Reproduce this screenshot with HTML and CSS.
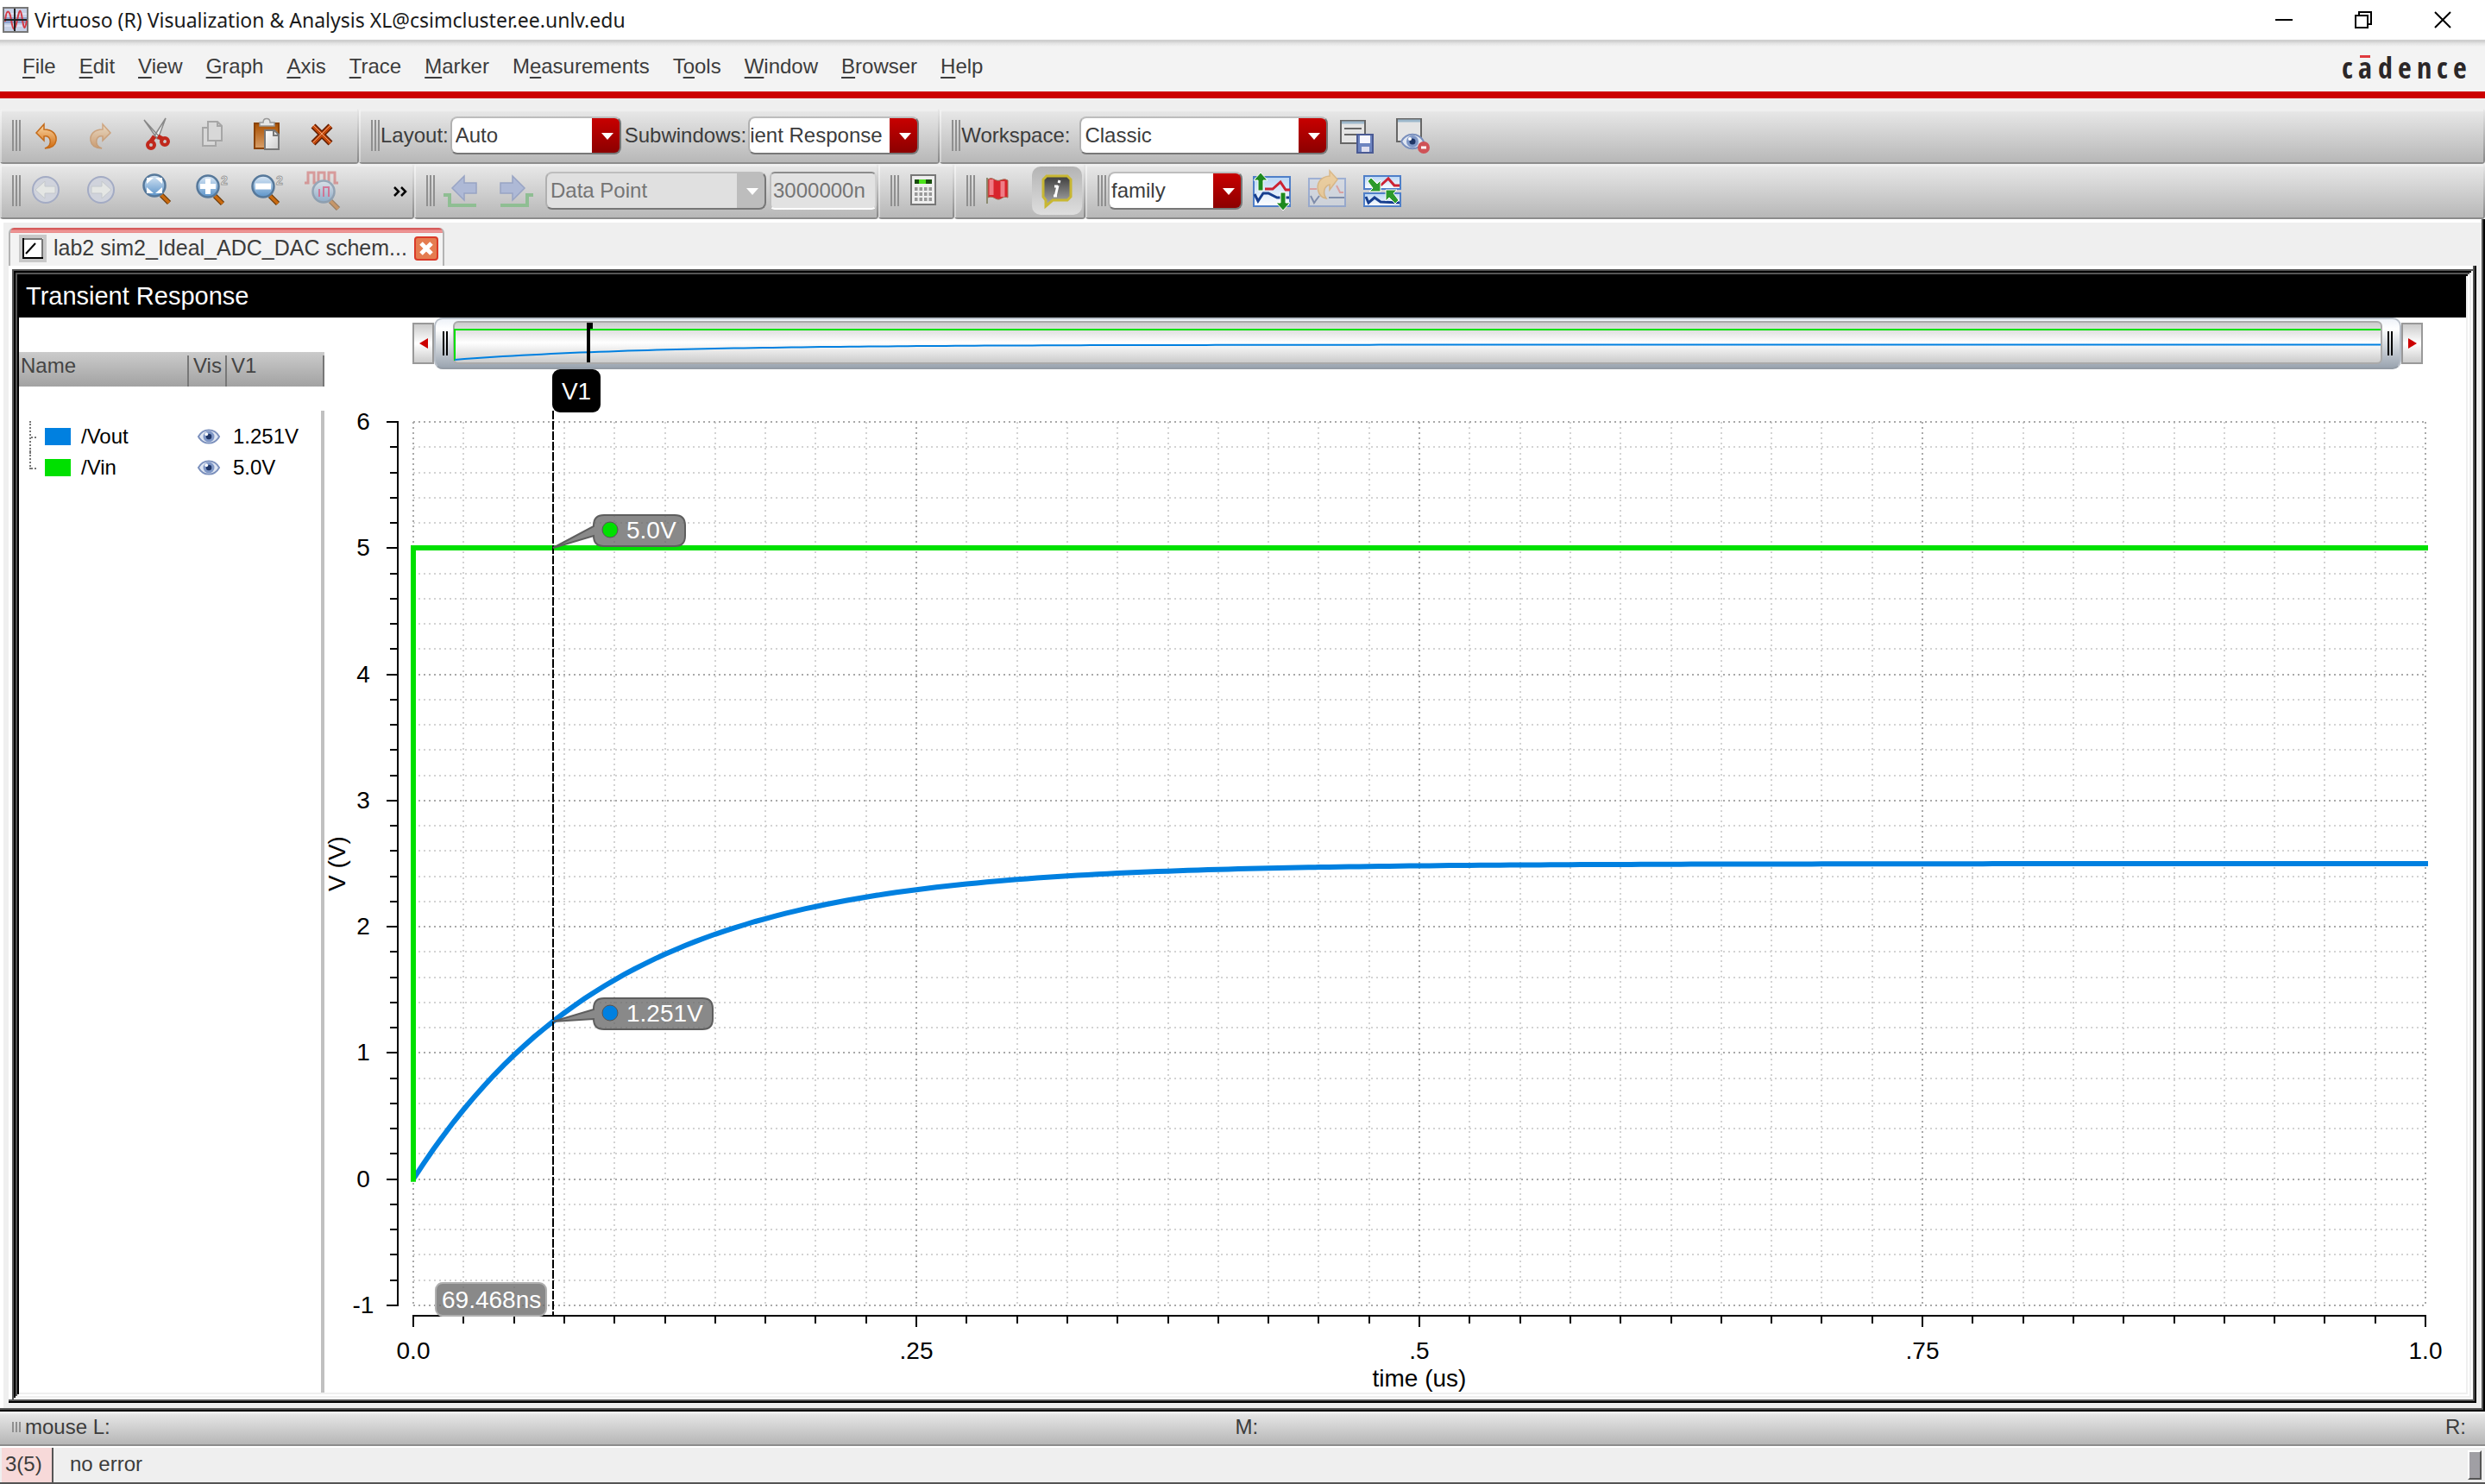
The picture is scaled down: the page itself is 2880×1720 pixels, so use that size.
FILE: index.html
```html
<!DOCTYPE html>
<html lang="en">
<head>
<meta charset="utf-8">
<title>Virtuoso (R) Visualization &amp; Analysis XL</title>
<link rel="stylesheet" href="styles.css">
</head>
<body>
<svg width="0" height="0" class="defs" aria-hidden="true">
  <defs>
    <linearGradient id="orange" x1="0" y1="0" x2="0" y2="1"><stop offset="0" stop-color="#fbd9a8"/><stop offset="1" stop-color="#d0690c"/></linearGradient>
    <linearGradient id="board" x1="0" y1="0" x2="0" y2="1"><stop offset="0" stop-color="#a84f00"/><stop offset="1" stop-color="#d9a06a"/></linearGradient>
    <linearGradient id="paper" x1="0" y1="0" x2="1" y2="1"><stop offset="0" stop-color="#fff"/><stop offset="1" stop-color="#ccc"/></linearGradient>
    <linearGradient id="glass" x1="0" y1="0" x2="0" y2="1"><stop offset="0" stop-color="#dbe9f6"/><stop offset="1" stop-color="#5b93c9"/></linearGradient>
    <linearGradient id="sky" x1="0" y1="0" x2="0" y2="1"><stop offset="0" stop-color="#b9d6f5"/><stop offset="1" stop-color="#fff"/></linearGradient>
    <linearGradient id="bubble" x1="0" y1="0" x2="0" y2="1"><stop offset="0" stop-color="#3c3c3c"/><stop offset="1" stop-color="#b0b0b0"/></linearGradient>
    <g id="lens"><path d="M26 26l9 9" stroke="#6b3a08" stroke-width="6"/><path d="M26 26l9 9" stroke="#c96a10" stroke-width="3.5"/><circle cx="18" cy="15" r="12.500" fill="url(#glass)" stroke="#56789a" stroke-width="2.500"/></g>
    <g id="eye"><path d="M0 9C6-2 20-2 26 9C20 20 6 20 0 9z" fill="#dfe6f2" stroke="#7a8fbc" stroke-width="2"/><circle cx="13" cy="9" r="7" fill="#7f97c6"/><circle cx="13" cy="9" r="3.500" fill="#1f3566"/><circle cx="10" cy="6" r="2" fill="#fff"/></g>
  </defs>
</svg>

<header class="titlebar">
  <svg class="app-icon" width="30" height="30" viewBox="0 0 30 30" aria-hidden="true"><rect x="1" y="1" width="28" height="28" fill="#c6d0e6" stroke="#777" stroke-width="2"/><path d="M2 8h26M2 22h26" stroke="#eef" stroke-width="1"/><path d="M2 12h26v7H2z" fill="#8fa3cf"/><path d="M3 17C4 2 8 2 10 15S14 30 17 15S21 2 23 15S26 26 28 16" fill="none" stroke="#d43b45" stroke-width="2"/><path d="M2 15h26M14 2v26" stroke="#222" stroke-width="2"/></svg>
  <h1>Virtuoso (R) Visualization &amp; Analysis XL@csimcluster.ee.unlv.edu</h1>
  <div class="window-buttons">
    <button aria-label="Minimize"><svg width="20" height="20" viewBox="0 0 20 20"><path d="M0 10h20" stroke="#000" stroke-width="2"/></svg></button>
    <button aria-label="Restore"><svg width="20" height="20" viewBox="0 0 20 20"><path d="M1 5h14v14H1zM5 5V1h14v14h-4" fill="none" stroke="#000" stroke-width="2"/></svg></button>
    <button aria-label="Close"><svg width="20" height="20" viewBox="0 0 20 20"><path d="M1 1l18 18M19 1L1 19" stroke="#000" stroke-width="2"/></svg></button>
  </div>
</header>

<nav class="menubar">
  <div class="menus">
    <button><u>F</u>ile</button><button><u>E</u>dit</button><button><u>V</u>iew</button><button><u>G</u>raph</button><button><u>A</u>xis</button><button><u>T</u>race</button><button><u>M</u>arker</button><button>M<u>e</u>asurements</button><button>T<u>o</u>ols</button><button><u>W</u>indow</button><button><u>B</u>rowser</button><button><u>H</u>elp</button>
  </div>
  <svg class="brand" width="148" height="34" viewBox="0 0 148 34" role="img"><text x="0 19 42 65 87 110 129" y="31">cadence</text><path d="M21 5.500h12" stroke="#e03a3e" stroke-width="3"/></svg>
</nav>

<div class="toolbars">
  <div class="toolbar">
    <div class="group icons">
      <i class="grip"></i>
      <button aria-label="Undo"><svg viewBox="0 0 40 40"><path d="M9 17L18 7v6c10 0 15 6 14 13c-1 6-6 9-13 9c5-2 7-6 6-10c-1-3-3-5-7-4v5z" fill="url(#orange)" stroke="#c46a18" stroke-width="1.500"/></svg></button>
      <button aria-label="Redo"><svg viewBox="0 0 40 40" opacity=".45"><path d="M31 17L22 7v6c-10 0-15 6-14 13c1 6 6 9 13 9c-5-2-7-6-6-10c1-3 3-5 7-4v5z" fill="url(#orange)" stroke="#c46a18" stroke-width="1.500"/></svg></button>
      <button aria-label="Cut"><svg viewBox="0 0 40 40"><path d="M6 2l14 20 4 0zM31 0L17 22l5 2z" fill="#f4f4f4" stroke="#888" stroke-width="1.500"/><path d="M18 21l-5 7M22 21l7 4" stroke="#c0281c" stroke-width="5"/><circle cx="14" cy="31" r="4" fill="none" stroke="#c0281c" stroke-width="4"/><circle cx="30" cy="27" r="4" fill="none" stroke="#c0281c" stroke-width="4"/></svg></button>
      <button aria-label="Copy"><svg viewBox="0 0 40 40" fill="#d8d8d8" stroke="#a6a6a6" stroke-width="2"><path d="M10 11h15v21H10z"/><path d="M16 4h11l5 5v17H16z"/><path d="M27 4v5h5" fill="none"/></svg></button>
      <button aria-label="Paste"><svg viewBox="0 0 40 40"><path d="M6 6h28v29H6z" fill="url(#board)" stroke="#8a4300" stroke-width="2"/><path d="M12 9V5h4c0-6 8-6 8 0h5v4z" fill="#e6e6e6" stroke="#999" stroke-width="1.500"/><path d="M18 14h11l5 5v17H18z" fill="url(#paper)" stroke="#777" stroke-width="2"/><path d="M28 14v6h6" fill="none" stroke="#777" stroke-width="2"/></svg></button>
      <button aria-label="Delete"><svg viewBox="0 0 40 40"><path d="M10 9l20 20M30 9L10 29" stroke="#5e1c00" stroke-width="7"/><path d="M10 9l20 20M30 9L10 29" stroke="#c4490c" stroke-width="4"/><path d="M10 8l20 20M30 8L10 28" stroke="#f2a070" stroke-width="1"/></svg></button>
    </div>
    <div class="group layout-group">
      <i class="grip"></i>
      <label for="layout">Layout:</label>
      <span class="combo mid"><select id="layout"><option>Auto</option></select></span>
      <label for="sub">Subwindows:</label>
      <span class="combo mid tight"><select id="sub"><option>ient Response</option></select></span>
    </div>
    <div class="group grow workspace-group">
      <i class="grip"></i>
      <label for="space">Workspace:</label>
      <span class="combo wide"><select id="space"><option>Classic</option></select></span>
      <button aria-label="Save workspace"><svg viewBox="0 0 40 40"><path d="M1 3h28v26H1z" fill="#e4e4e4" stroke="#666" stroke-width="2"/><path d="M2 5h26" stroke="#9db8cc" stroke-width="3"/><path d="M5 12h20M5 19h16" stroke="#666" stroke-width="2"/><rect x="20" y="19" width="18" height="21" fill="#6d84c0" stroke="#4a5a94" stroke-width="2"/><rect x="23" y="20" width="12" height="9" fill="#f6f6ff"/><rect x="25" y="33" width="9" height="6" fill="#dde"/></svg></button>
      <button aria-label="Hide assistants"><svg viewBox="0 0 40 40"><path d="M2 1h28v26H2z" fill="#e4e4e4" stroke="#666" stroke-width="2"/><path d="M3 3h26" stroke="#9db8cc" stroke-width="3"/><use href="#eye" x="7" y="18"/><circle cx="33" cy="34" r="7" fill="#cf5257"/><path d="M30 34h6" stroke="#fff" stroke-width="3"/></svg></button>
    </div>
  </div>
  <div class="toolbar">
    <div class="group icons with-more">
      <i class="grip"></i>
      <button aria-label="Back"><svg viewBox="0 0 40 40"><circle cx="20" cy="19" r="15" fill="#d0d3dc" stroke="#a3abc4" stroke-width="2"/><path d="M8 19l11-10v6h12v8H19v6z" fill="#e4e6e4" stroke="#c4c8cc"/></svg></button>
      <button aria-label="Forward"><svg viewBox="0 0 40 40"><circle cx="20" cy="19" r="15" fill="#d0d3dc" stroke="#a3abc4" stroke-width="2"/><path d="M32 19L21 9v6H9v8h12v6z" fill="#e4e6e4" stroke="#c4c8cc"/></svg></button>
      <button aria-label="Zoom fit"><svg viewBox="0 0 40 40"><use href="#lens" y="-1"/><path d="M9 12V5h8zM27 12V5h-8zM9 16v7h8zM27 16v7h-8z" fill="#fff"/></svg></button>
      <button aria-label="Zoom in"><svg viewBox="0 0 40 40"><use href="#lens" x="-2"/><path d="M16 6v18M7 15h18" stroke="#fff" stroke-width="6"/><text x="31" y="13" class="badge">2</text></svg></button>
      <button aria-label="Zoom out"><svg viewBox="0 0 40 40"><use href="#lens" x="-2"/><path d="M7 15h18" stroke="#fff" stroke-width="7"/><text x="31" y="13" class="badge">2</text></svg></button>
      <button aria-label="Zoom waveform"><svg viewBox="0 0 40 40" opacity=".5"><path d="M0 11h4V-1h7v12h5V-1h7v12h5V-1h7v12h4" fill="none" stroke="#d05858" stroke-width="3"/><g transform="translate(4 6)"><use href="#lens"/><path d="M13 12v9M18 21v-11h6v11" fill="none" stroke="#d02060" stroke-width="2"/></g></svg></button>
      <button class="more" aria-label="More tools"><svg viewBox="0 0 16 12"><path d="M1 1l5 5-5 5M9 1l5 5-5 5" fill="none" stroke="#000" stroke-width="2.500"/></svg></button>
    </div>
    <div class="group step-group">
      <i class="grip"></i>
      <button aria-label="Previous point"><svg viewBox="0 0 40 40"><path d="M10 17L24 3v8h14v12H24v8z" fill="#aeb9d6" stroke="#98a4c4" stroke-width="1.500"/><path d="M0 25h7v12h31" fill="none" stroke="#8fbe93" stroke-width="4"/></svg></button>
      <button aria-label="Next point"><svg viewBox="0 0 40 40"><path d="M30 17L16 3v8H2v12h14v8z" fill="#aeb9d6" stroke="#98a4c4" stroke-width="1.500"/><path d="M2 37h31V25h7" fill="none" stroke="#8fbe93" stroke-width="4"/></svg></button>
      <span class="combo step off"><select aria-label="Step mode" disabled><option>Data Point</option></select></span>
      <input class="step-size" type="text" value="3000000n" aria-label="Step size" disabled>
    </div>
    <div class="group calc-group">
      <i class="grip"></i>
      <button aria-label="Calculator"><svg viewBox="0 0 40 40"><rect x="6" y="2" width="28" height="34" fill="#eee" stroke="#777" stroke-width="2"/><rect x="10" y="7" width="20" height="5" fill="#174d0c"/><rect x="15" y="7" width="8" height="5" fill="#4be31b"/><path d="M10 18h20M10 24h20M10 30h20" stroke="#999" stroke-width="4" stroke-dasharray="3.500 2"/></svg></button>
    </div>
    <div class="group flag-group">
      <i class="grip"></i>
      <button aria-label="Add marker"><svg viewBox="0 0 40 40"><path d="M8 5v30" stroke="#8b8b70" stroke-width="2"/><path d="M9 7c6-4 8 3 14 1s6-1 9 0v20c-5-2-6 1-10 2s-7-5-13-2z" fill="#d8242c" stroke="#a06a50" stroke-width="1"/><path d="M13 7v18M26 9v18" stroke="#ef7d86" stroke-width="5"/></svg></button>
      <button class="pressed" aria-label="Info balloons"><svg viewBox="0 0 40 40"><path d="M8 3h24l4 4v20l-4 4H15l-8 7v-7l-3-4V7z" fill="url(#bubble)" stroke="#c8b733" stroke-width="3"/><path d="M23 8l-1 3M21 14l-3 13M17 15h4M16 26h4" stroke="#fff" stroke-width="3"/></svg></button>
    </div>
    <div class="group grow family-group">
      <i class="grip"></i>
      <span class="combo small"><select aria-label="Strip mode"><option>family</option></select></span>
      <button aria-label="Split strips"><svg viewBox="0 0 44 40"><rect x="1" y="4" width="42" height="34" fill="url(#sky)" stroke="#4f7fc8" stroke-width="2"/><path d="M14 18h9l9-8 6 9h5" fill="none" stroke="#cc2233" stroke-width="3"/><path d="M2 24l4 8 6-9 6 0 10 5h14" fill="none" stroke="#173f8f" stroke-width="3"/><path d="M9-1l8 9h-5v12H6V8H1zM35 43l8-9h-5V22h-6v12h-5z" fill="#1e8a1e" stroke="#fff"/></svg></button>
      <button aria-label="Restore strips"><svg viewBox="0 0 44 40" opacity=".65"><rect x="1" y="6" width="42" height="32" fill="#d3dae6" stroke="#7f9ad0" stroke-width="2"/><path d="M2 18h8M33 14l4 8h4" fill="none" stroke="#d88" stroke-width="2"/><path d="M3 26l4 8 6-8M24 28h18" fill="none" stroke="#5a6f9c" stroke-width="2"/><path d="M34 7L25-3v6C14 4 9 12 12 21c1 4 4 7 9 8c-4-6-3-14 4-16v6z" fill="#f2c680" stroke="#d8a55c" stroke-width="1.500"/></svg></button>
      <button aria-label="Merge strips"><svg viewBox="0 0 44 40"><rect x="1" y="3" width="42" height="15" fill="url(#sky)" stroke="#4f7fc8" stroke-width="2"/><rect x="1" y="23" width="42" height="15" fill="url(#sky)" stroke="#4f7fc8" stroke-width="2"/><path d="M20 14l9-8 7 8 6 0" fill="none" stroke="#cc2233" stroke-width="3"/><path d="M3 27l3 7 7-6 7 5 22 1" fill="none" stroke="#173f8f" stroke-width="3"/><path d="M5 9l4-4 7 7 4-4v13H7l4-4zM41 31l-4 4-7-7-4 4V19h13l-4 4z" fill="#2c9a2c" stroke="#fff"/></svg></button>
    </div>
  </div>
</div>

<main class="workspace">
  <div class="tabs">
    <div class="tab">
      <svg width="32" height="32" viewBox="0 0 32 32" aria-hidden="true"><path d="M0 0h32v32H0z" fill="#c8c8c8"/><path d="M4 4h24v24H4z" fill="#fff"/><path d="M27 5v22M5 5h22" stroke="#777" stroke-width="2"/><path d="M5 4v23h23" fill="none" stroke="#000" stroke-width="2"/><path d="M8 22L19 10" stroke="#000" stroke-width="2"/></svg>
      <a href="#plot">lab2 sim2_Ideal_ADC_DAC schem...</a>
      <button aria-label="Close tab"><svg width="28" height="28" viewBox="0 0 28 28"><rect x="1" y="1" width="26" height="26" rx="3" fill="#e57c50" stroke="#da3a28" stroke-width="2"/><path d="M8 8l12 12M20 8L8 20" stroke="#fff" stroke-width="5"/></svg></button>
    </div>
  </div>
  <div class="subwindow">
    <div class="frame">
      <h2>Transient Response</h2>
      <div class="content" id="plot">
        <aside class="legend">
          <table>
            <thead><tr><th class="name">Name</th><th class="vis">Vis</th><th>V1</th></tr></thead>
            <tbody>
              <tr><td class="trace"><i class="branch"></i><i class="swatch blue"></i>/Vout</td><td class="vis"><svg width="26" height="20" viewBox="-1 -1 28 20"><use href="#eye"/></svg></td><td>1.251V</td></tr>
              <tr><td class="trace"><i class="branch last"></i><i class="swatch green"></i>/Vin</td><td class="vis"><svg width="26" height="20" viewBox="-1 -1 28 20"><use href="#eye"/></svg></td><td>5.0V</td></tr>
            </tbody>
          </table>
        </aside>
        <section class="graph">
          <div class="ranger">
            <button class="nudge" aria-label="Pan left"><svg width="10" height="12" viewBox="0 0 10 12"><path d="M10 0v12L0 6z" fill="#c00"/></svg></button>
            <div class="track">
              <i class="handle"></i>
              <div class="overview"><svg id="overview"></svg></div>
              <i class="handle"></i>
            </div>
            <button class="nudge" aria-label="Pan right"><svg width="10" height="12" viewBox="0 0 10 12"><path d="M0 0v12l10-6z" fill="#c00"/></svg></button>
          </div>
          <div class="canvas"><svg id="chart" role="img"></svg></div>
        </section>
      </div>
    </div>
  </div>
</main>

<footer>
  <div class="mousebar"><i class="grip short"></i><span>mouse L:</span><span>M:</span><span>R:</span></div>
  <div class="status"><span class="count">3(5)</span><span class="message">no error</span><i class="knob"></i></div>
</footer>
<script src="chart.js"></script>
</body>
</html>
```
FILE: styles.css
```css
* { box-sizing: border-box; }

body {
  margin: 0;
  min-height: 100vh;
  display: flex;
  flex-direction: column;
  background: #efefef;
  color: #3c3c3c;
  font: 24px/32px "Liberation Sans", Arial, sans-serif;
}

button {
  margin: 0;
  padding: 0;
  border: 0;
  background: none;
  color: inherit;
  font: inherit;
}

svg { display: block; overflow: visible; }
.defs { position: absolute; }

/* Title bar */
.titlebar {
  display: flex;
  align-items: center;
  height: 46px;
  padding: 0 39px 0 3px;
  background: #fff;
  color: #1a1a1a;
}
.titlebar h1 {
  flex: 1;
  margin: 0 0 0 7px;
  font: 400 23px/32px "Noto Sans", "Open Sans", sans-serif;
}
.window-buttons { display: flex; gap: 72px; }

/* Menu bar */
.menubar {
  display: flex;
  justify-content: space-between;
  align-items: center;
  height: 68px;
  padding: 2px 18px 0 26px;
  background: linear-gradient(#cfcfcf 2px, #e2e2e2 4px, #f3f3f3 8px);
  border-bottom: 8px solid #c00;
}
.menus { display: flex; gap: 27px; }
.menus u { text-decoration-thickness: 2px; text-underline-offset: 4px; }
.brand text {
  font: 700 34px "Liberation Sans Narrow", "Open Sans Condensed", "DejaVu Sans Condensed", sans-serif;
  fill: #2b2728;
}

/* Toolbars */
.toolbars { padding-top: 12px; }
.toolbar { display: flex; }
.group {
  display: flex;
  align-items: center;
  height: 64px;
  padding: 0 0 2px 14px;
  border-radius: 4px;
  background:
    linear-gradient(#8c8c8c, #8c8c8c) bottom / 100% 2px no-repeat,
    linear-gradient(#e8e8e8, #858585) right / 2px 100% no-repeat,
    linear-gradient(#f4f4f4, #d0d0d0) left / 2px 100% no-repeat,
    linear-gradient(#f0f0f0 2px, #e6e6e6 4px, #b6b6b6);
}
.group.grow { flex: 1; }
.group button { width: 40px; height: 40px; flex: none; }
.group button svg { width: 100%; height: 40px; }
.grip {
  flex: none;
  width: 10px;
  height: 36px;
  background: repeating-linear-gradient(90deg, #8f8f8f 0 2px, transparent 2px 4px);
}
.grip.short { height: 12px; }

.icons { gap: 24px; padding-right: 23px; }
.icons .grip { margin-right: -15px; }
.icons.with-more { padding-right: 8px; }
.group .more { width: 16px; height: 16px; margin-left: 39px; }
.group .more svg { height: 12px; margin-top: 2px; }
.badge { font: 700 14px "Liberation Sans", sans-serif; fill: #fff; stroke: #999; stroke-width: 1px; }

.layout-group { padding-right: 24px; }
.layout-group label { padding: 0 2px 0 1px; }
.layout-group .combo + label { padding-left: 4px; }
.workspace-group label { padding: 0 11px 0 1px; }
.workspace-group button { margin-left: 14px; }
.workspace-group button + button { margin-left: 24px; }
.step-group { padding-right: 2px; }
.step-group button { margin-left: 10px; }
.step-group button + button { margin-left: 24px; }
.step-group .combo { margin-left: 14px; }
.calc-group { padding-right: 16px; }
.calc-group button { margin-left: 8px; }
.flag-group { padding-right: 4px; }
.flag-group button { margin-left: 6px; }
.flag-group .pressed {
  width: 58px;
  height: 56px;
  margin-left: 20px;
  border-radius: 10px;
  background: linear-gradient(#b4b4b4, #dedede);
}
.flag-group .grip { margin-left: 0; }
.family-group button { width: 44px; margin-left: 12px; }
.family-group button + button { margin-left: 20px; }
.family-group .combo { margin-left: 2px; }

.combo { position: relative; display: block; height: 44px; flex: none; }
.combo::after {
  content: "";
  position: absolute;
  top: 19px;
  right: 9px;
  border: 7px solid transparent;
  border-top: 8px solid #fff;
  border-bottom: 0;
  pointer-events: none;
}
.combo select {
  appearance: none;
  width: 100%;
  height: 44px;
  padding: 0 0 0 4px;
  border: 2px solid;
  border-color: #bdbdbd #777 #777 #b0b0b0;
  border-radius: 8px;
  background: linear-gradient(#c80000, #8c0000) right / 32px 100% no-repeat #fff;
  color: #3c3c3c;
  font: inherit;
}
.combo.off select {
  background: linear-gradient(#bdbdbd, #bdbdbd) right / 32px 100% no-repeat #e0e0e0;
  color: #747474;
  opacity: 1;
}
.combo.tight select { padding-left: 0; }
.mid { width: 198px; }
.wide { width: 288px; }
.step { width: 256px; }
.small { width: 156px; }
.small select { padding-left: 2px; }
.step-size {
  width: 124px;
  height: 44px;
  margin-left: 4px;
  padding: 0 2px;
  border: 2px solid;
  border-color: #8c8c8c #d0d0d0 #fff #c0c0c0;
  border-radius: 6px;
  background: #e2e2e2;
  color: #747474;
  font: inherit;
}

/* Workspace with its tab and bevelled frames */
.workspace {
  flex: 1;
  display: flex;
  flex-direction: column;
  padding: 4px 10px 10px;
  box-shadow: inset -2px -2px #000, inset -4px -4px #555, inset 4px 4px #fff;
}
.tabs { display: flex; height: 50px; padding-top: 6px; }
.tab {
  display: flex;
  align-items: center;
  padding: 0 5px 0 10px;
  border: 2px solid #b4b4b4;
  border-width: 0 2px;
  border-radius: 6px 6px 0 0;
  background: linear-gradient(#d65c5c 2px, #f09a9a 3px, #e88a8a 6px, #f3f3f3 6px);
}
.tab > svg, .tab button { margin-top: 3px; }
.tab a { margin: 2px 8px 0 8px; color: inherit; font-size: 25px; text-decoration: none; }
.subwindow {
  flex: 1;
  display: flex;
  padding: 4px;
  box-shadow: inset -2px -2px #000, inset -4px -4px #555, inset 4px 4px #fff;
}
.frame {
  flex: 1;
  display: flex;
  flex-direction: column;
  min-width: 0;
  padding: 8px;
  background: #fff;
  box-shadow:
    inset 2px 2px #555, inset -2px -2px #fff,
    inset 4px 4px #000, inset -4px -4px #efefef,
    inset 6px 6px #555, inset -6px -6px #fff,
    inset 8px 8px #000, inset -8px -8px #efefef;
}
.frame h2 {
  margin: 0;
  padding: 7px 8px 9px;
  background: #000;
  color: #fff;
  font-size: 29px;
  font-weight: 400;
}
.content { flex: 1; display: flex; color: #000; }

/* Trace list */
.legend {
  flex: none;
  width: 354px;
  padding-top: 40px;
  background: linear-gradient(#c0c0c0, #c0c0c0) right 108px / 4px 100% no-repeat;
}
.legend table { width: 100%; border-collapse: collapse; table-layout: fixed; }
.legend thead tr { height: 40px; background: linear-gradient(#cbcbcb, #a2a2a2); }
.legend th {
  padding: 0 0 8px 5px;
  color: #444;
  font-weight: 400;
  text-align: left;
  vertical-align: middle;
  background: linear-gradient(#777, #777) right 4px / 2px 100% no-repeat;
}
.legend .name { width: 197px; padding-left: 2px; }
.legend th.vis { width: 44px; }
.legend tbody::before { content: ""; display: block; height: 40px; }
.legend tbody tr { height: 36px; }
.legend td { padding: 0 0 0 7px; }
.legend td.vis { padding-left: 10px; }
.legend .trace { display: flex; align-items: center; height: 36px; padding-left: 12px; }
.branch { width: 10px; height: 36px; border-left: 2px dotted #777; background: repeating-linear-gradient(90deg, #777 0 2px, transparent 2px 4px) left 18px / 10px 2px no-repeat; }
.branch.last { height: 20px; align-self: flex-start; }
.swatch { width: 30px; height: 20px; margin: 0 12px 0 8px; }
.blue { background: #0080e0; }
.green { background: #00e000; }

/* Graph */
.graph { flex: 1; min-width: 0; display: flex; flex-direction: column; }
.ranger { display: flex; align-items: center; height: 60px; padding: 0 50px 0 102px; }
.nudge {
  display: flex;
  align-items: center;
  justify-content: center;
  width: 25px;
  height: 48px;
  border: 2px solid #999;
  background: linear-gradient(#ccc, #fff 50%, #ccc);
}
.track {
  flex: 1;
  min-width: 0;
  display: flex;
  align-items: center;
  gap: 6px;
  height: 60px;
  padding: 0 8px;
  border: 2px solid #b8bfc8;
  border-bottom-color: #949ca6;
  border-radius: 10px;
  background: linear-gradient(#eef2f8, #fff 20%, #9aa4b0);
}
.handle { width: 6px; height: 28px; border: 2px solid #000; border-width: 0 2px; }
.overview {
  flex: 1;
  min-width: 0;
  height: 50px;
  margin-top: -2px;
  border: 2px solid #aaa;
  border-radius: 6px;
  background: linear-gradient(#ccc, #fff 50%, #ccc);
}
.overview svg { width: 100%; height: 46px; }
.canvas { flex: 1; position: relative; min-height: 400px; }
.canvas svg { position: absolute; inset: 0; width: 100%; height: 100%; }
.canvas text { font: 28px "Liberation Sans", Arial, sans-serif; }

/* Footer */
.mousebar {
  display: grid;
  grid-template-columns: 10px 1fr 1fr auto;
  align-items: center;
  column-gap: 5px;
  height: 42px;
  padding: 0 22px 4px 14px;
  border-bottom: 2px solid #fff;
  background: linear-gradient(#efefef 2px, #e4e4e4 4px, #b6b6b6 38px, #8c8c8c 38px);
}
.status {
  display: flex;
  align-items: center;
  height: 42px;
  padding: 0 4px 0 2px;
  border-bottom: 2px solid #555;
}
.count {
  width: 60px;
  height: 40px;
  padding: 3px 4px;
  border-right: 2px solid #555;
  background: #f7d9d9;
}
.message { flex: 1; padding: 0 0 2px 19px; }
.knob {
  width: 16px;
  height: 34px;
  border: 2px solid;
  border-color: #fff #555 #555 #fff;
  background: #a09fa4;
}
```
FILE: chart.js
```javascript
const BLUE = '#0080e0';
const GREEN = '#00e000';
const TAU = 0.1002;
const MARKER = 0.069468;
const vout = t => 2.5 * (1 - Math.exp(-t / TAU));

function curve(px, py, steps) {
  let d = '';
  for (let i = 0; i <= steps; i++) {
    d += (i ? 'L' : 'M') + px(i / steps).toFixed(1) + ' ' + py(vout(i / steps)).toFixed(1);
  }
  return d;
}

function line(x1, y1, x2, y2, stroke, extra = '') {
  return `<path d="M${x1} ${y1}L${x2} ${y2}" stroke="${stroke}" stroke-width="2" fill="none" ${extra}/>`;
}

function callout(x, y, top, width, textX, label, color) {
  const left = x + 47, mid = top + 18;
  return `<path d="M${left + 12} ${top}H${left + width - 12}q12 0 12 12v12q0 12 -12 12H${left + 12}q-12 0 -12 -12L${x} ${y}L${left} ${mid - 5}v-1q0 -12 12 -12z"
    fill="#6b6b6b" fill-opacity=".8" stroke="#5e5e5e" stroke-width="2"/>
    <circle cx="${left + 19}" cy="${mid - 1}" r="9" fill="${color}" stroke="#555"/>
    <text x="${x + textX}" y="${top + 27}" fill="#fff">${label}</text>`;
}

function drawChart() {
  const svg = document.getElementById('chart');
  const w = svg.parentNode.clientWidth, h = svg.parentNode.clientHeight;
  const left = 103, right = w - 47, top = 61, bottom = h - 101;
  const px = t => left + t * (right - left);
  const py = v => bottom - (v + 1) / 7 * (bottom - top);
  const axisX = left - 18, axisY = bottom + 12;
  const dots = 'stroke-dasharray="2 4"';
  let minor = '', major = '', ticks = '';

  for (let i = 0; i <= 35; i++) {
    const y = Math.round(py(i / 5 - 1)), big = i % 5 === 0;
    const g = line(left, y, right, y, big ? '#a9a9a9' : '#d3d3d3', dots);
    if (big) major += g; else minor += g;
    ticks += line(axisX - (big ? 13 : 9), y, axisX, y, '#000');
    if (big) ticks += `<text x="45" y="${y + 9}" text-anchor="middle">${i / 5 - 1}</text>`;
  }
  const names = ['0.0', '.25', '.5', '.75', '1.0'];
  for (let i = 0; i <= 40; i++) {
    const x = Math.round(px(i / 40)), big = i % 10 === 0;
    const g = line(x, top, x, bottom, big ? '#a9a9a9' : '#d3d3d3', dots);
    if (big) major += g; else minor += g;
    ticks += line(x, axisY, x, axisY + (big ? 13 : 9), '#000');
    if (big) ticks += `<text x="${x}" y="${bottom + 62}" text-anchor="middle">${names[i / 10]}</text>`;
  }
  const mx = Math.round(px(MARKER));
  const y5 = Math.round(py(5)), yOut = Math.round(py(vout(MARKER)));
  const midY = Math.round((top + bottom) / 2);

  svg.innerHTML = minor + major + ticks
    + line(axisX, top - 1, axisX, bottom + 1, '#000')
    + line(left - 1, axisY, right + 1, axisY, '#000')
    + `<text x="${(left + right) / 2}" y="${bottom + 94}" text-anchor="middle">time (us)</text>`
    + `<text transform="translate(24 ${midY}) rotate(-90)" text-anchor="middle">V (V)</text>`
    + `<path d="${curve(px, py, 200)}h3" fill="none" stroke="${BLUE}" stroke-width="6"/>`
    + `<path d="M${left} ${py(0) + 3}V${y5}H${right + 3}" fill="none" stroke="${GREEN}" stroke-width="6"/>`
    + line(mx, 48, mx, axisY, '#000', 'stroke-dasharray="10 2"')
    + callout(mx, y5, y5 - 38, 106, 85, '5.0V', GREEN)
    + callout(mx, yOut, yOut - 27, 138, 85, '1.251V', BLUE)
    + `<rect x="${mx - 136}" y="${bottom - 26}" width="128" height="38" rx="8" fill="#6b6b6b" fill-opacity=".8" stroke="#b0b0b0" stroke-width="2"/>`
    + `<text x="${mx - 129}" y="${bottom + 3}" fill="#fff">69.468ns</text>`
    + `<rect x="${mx - 1}" y="0" width="56" height="50" rx="9"/>`
    + `<text x="${mx + 27}" y="35" text-anchor="middle" fill="#fff">V1</text>`;
}

function drawOverview() {
  const svg = document.getElementById('overview');
  const w = svg.parentNode.clientWidth;
  const px = t => t * w;
  const py = v => 43 - v * 7;
  const mx = Math.round(px(MARKER)) - 16;
  svg.innerHTML = `<path d="M0 44V8H${w}" fill="none" stroke="${GREEN}" stroke-width="2"/>`
    + `<path d="${curve(px, py, 200)}" fill="none" stroke="${BLUE}" stroke-width="2"/>`
    + `<path d="M${mx + 14} 0h7v7h-3v39h-4z"/>`;
}

function draw() {
  drawChart();
  drawOverview();
}

draw();
addEventListener('resize', draw);
```
